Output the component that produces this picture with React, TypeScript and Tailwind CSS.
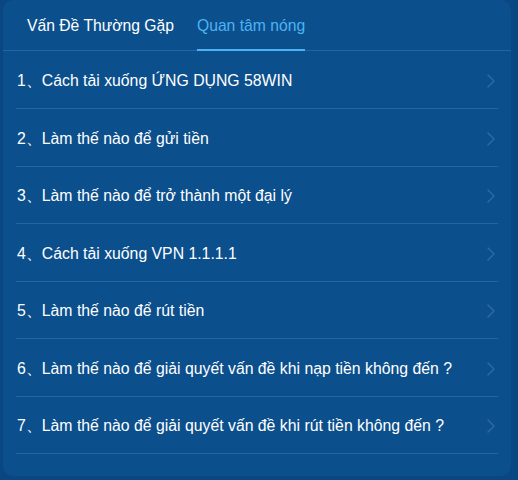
import React from "react";

const items = [
  "Cách tải xuống ỨNG DỤNG 58WIN",
  "Làm thế nào để gửi tiền",
  "Làm thế nào để trở thành một đại lý",
  "Cách tải xuống VPN 1.1.1.1",
  "Làm thế nào để rút tiền",
  "Làm thế nào để giải quyết vấn đề khi nạp tiền không đến ?",
  "Làm thế nào để giải quyết vấn đề khi rút tiền không đến ?",
];

function Chevron() {
  return (
    <svg width="10" height="16" viewBox="0 0 10 16" fill="none">
      <path d="M2 2l6 6-6 6" stroke="#2f6aa6" strokeWidth="1.4" strokeLinecap="round" strokeLinejoin="round" />
    </svg>
  );
}

export default function App() {
  return (
    <div
      className="w-[518px] h-[480px] bg-[#0a4682] pl-[3px] pr-[7px] pb-[4px]"
      style={{ fontFamily: '"Liberation Sans", Arial, sans-serif' }}
    >
      <div className="h-full bg-[#0c4f8d] rounded-[10px] flex flex-col">
        <div className="flex h-[51px] border-b border-[#2466a4] pl-[24px] gap-[23px] text-[15.7px]">
          <div className="flex items-center text-white pt-[1px]">Vấn Đề Thường Gặp</div>
          <div className="relative flex items-center text-[#4db3f4] pt-[1px]">
            Quan tâm nóng
            <div className="absolute left-0 right-0 bottom-[-1px] h-[2px] bg-[#4db3f4]" />
          </div>
        </div>
        <div className="px-[13px]">
          {items.map((t, i) => (
            <div
              key={i}
              className={`flex items-center justify-between border-b border-[#2466a4] pl-[1px] pr-[2px] pt-[3px] text-white text-[15.8px] ${i === 0 ? "h-[58px]" : "h-[57.5px]"}`}
            >
              <span>
                {i + 1}、{t}
              </span>
              <Chevron />
            </div>
          ))}
        </div>
      </div>
    </div>
  );
}
